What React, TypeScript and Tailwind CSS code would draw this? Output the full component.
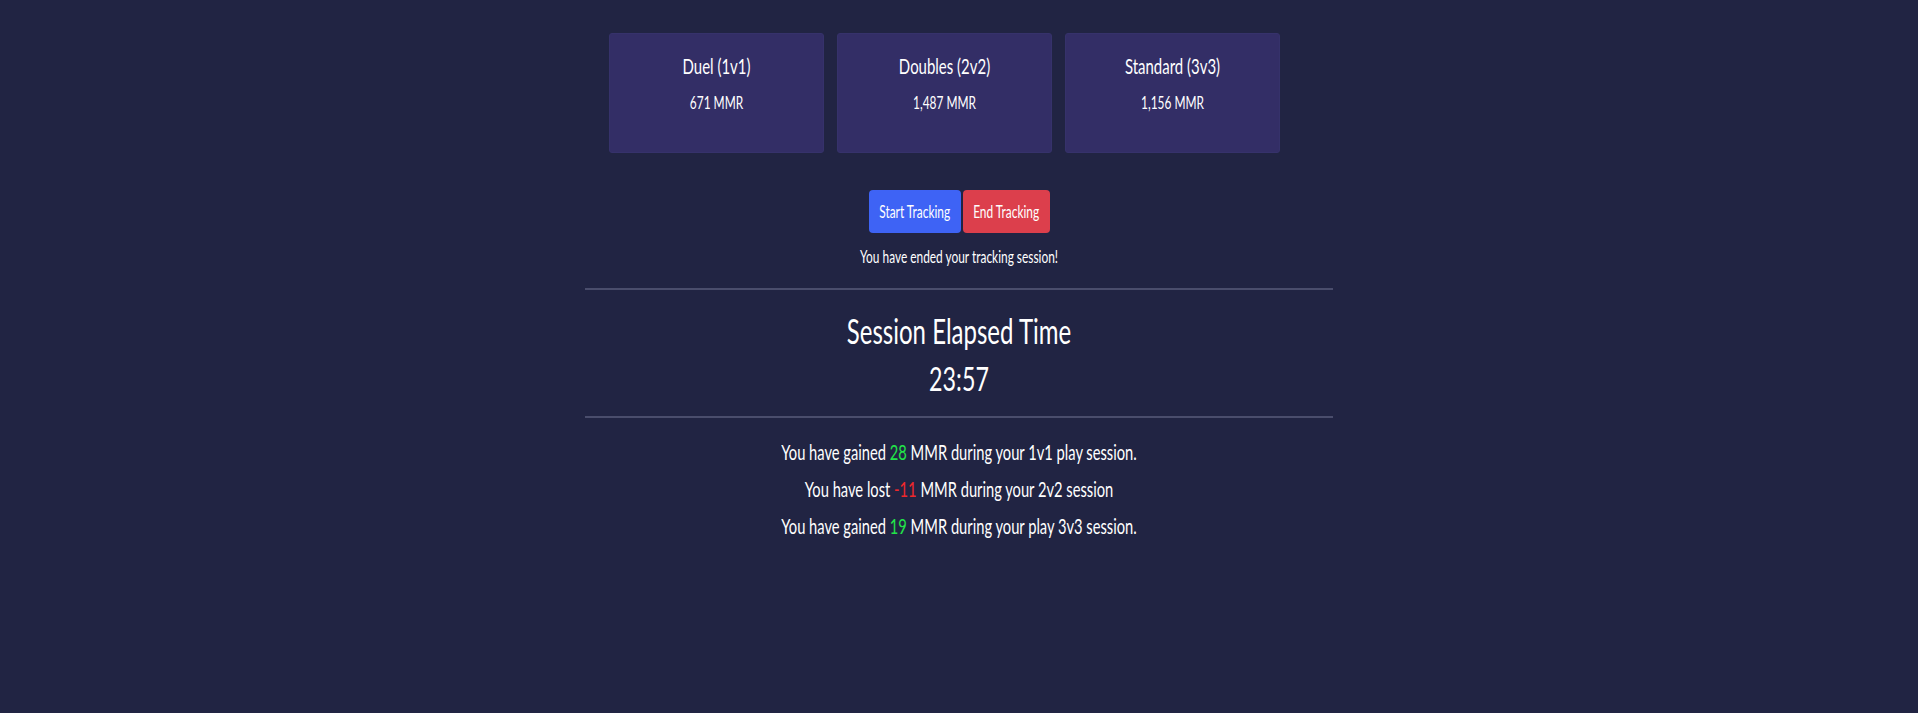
import React from "react";

const modes = [
  { name: "Duel (1v1)", mmr: "671 MMR" },
  { name: "Doubles (2v2)", mmr: "1,487 MMR" },
  { name: "Standard (3v3)", mmr: "1,156 MMR" },
];

export default function App() {
  return (
    <div className="min-h-screen bg-[#212443] text-white font-['Lato',sans-serif]">
      <div className="w-[748px] mx-auto pt-[33px]">
        <div className="flex gap-[13px] pl-[24px]">
          {modes.map((m) => (
            <div key={m.name} className="w-[215px] h-[120px] bg-[#332e66] rounded-[3px] border border-[#36326b] pt-[17px]">
              <p className="text-center text-[22px] leading-[30px] scale-x-[0.68]">{m.name}</p>
              <p className="text-center text-[17px] leading-[24px] mt-[10px] scale-x-[0.7]">{m.mmr}</p>
            </div>
          ))}
        </div>

        <div className="flex justify-center gap-[2px] mt-[37px]">
          <button className="w-[92px] h-[43px] rounded-[4px] bg-[#3e63f5] flex items-center justify-center text-[17px]">
            <span className="inline-block whitespace-nowrap scale-x-[0.7]">Start Tracking</span>
          </button>
          <button className="w-[87px] h-[43px] rounded-[4px] bg-[#dc3f4c] flex items-center justify-center text-[17px]">
            <span className="inline-block whitespace-nowrap scale-x-[0.7]">End Tracking</span>
          </button>
        </div>
        <p className="text-center text-[17px] leading-[24px] mt-[12px] scale-x-[0.7]">You have ended your tracking session!</p>

        <hr className="mt-[19px] border-t-2 border-[#4a4d6c]" />

        <h2 className="text-center text-[35px] leading-[44px] mt-[18px] scale-x-[0.686]">Session Elapsed Time</h2>
        <p className="text-center text-[33px] leading-[40px] mt-[6px] scale-x-[0.705]">23:57</p>

        <hr className="mt-[18px] border-t-2 border-[#4a4d6c]" />

        <div className="mt-[15px] text-[21px] leading-[37px] text-center">
          <p className="scale-x-[0.7]">
            You have gained <span className="text-[#22e449]">28</span> MMR during your 1v1 play session.
          </p>
          <p className="scale-x-[0.7]">
            You have lost <span className="text-[#f0282b]">-11</span> MMR during your 2v2 session
          </p>
          <p className="scale-x-[0.7]">
            You have gained <span className="text-[#22e449]">19</span> MMR during your play 3v3 session.
          </p>
        </div>
      </div>
    </div>
  );
}
